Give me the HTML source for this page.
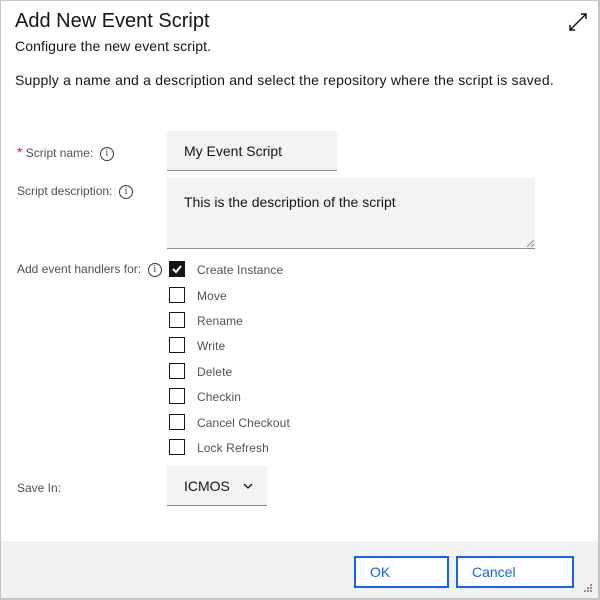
<!DOCTYPE html>
<html><head><style>
*{margin:0;padding:0;box-sizing:border-box}
body{width:600px;height:600px;background:#fff;font-family:"Liberation Sans",sans-serif;position:relative;overflow:hidden;color:#161616}
.frame{position:absolute;left:0;top:0;width:600px;height:600px;border:1px solid #c6c6c6;border-right:2px solid #c6c6c6;border-bottom:2px solid #c6c6c6}
.a{position:absolute;white-space:nowrap}
.lbl{font-size:12px;color:#525252}
.info{display:inline-block;width:14px;height:14px;border:1px solid #393939;border-radius:50%;font-size:10px;line-height:12px;text-align:center;color:#393939;font-family:"Liberation Serif",serif;vertical-align:middle}
.field{position:absolute;background:#f3f3f3;border-bottom:1px solid #8d8d8d}
.cb{position:absolute;left:169px;width:16px;height:16px;border:1px solid #161616;background:#fff}
.cbl{position:absolute;left:197px;font-size:12px;color:#525252;letter-spacing:0.1px}
.btn{position:absolute;top:556px;height:32px;border:2px solid #0f62fe;background:#fff;color:#0f62fe;font-size:14px;line-height:28px;padding-left:14px}
</style></head><body>
<div class="a" style="left:15px;top:10px;font-size:20px;">Add New Event Script</div>
<div class="a" style="left:15px;top:38px;font-size:14px;letter-spacing:0.1px">Configure the new event script.</div>
<div class="a" style="left:15px;top:72px;font-size:14px;letter-spacing:0.2px">Supply a name and a description and select the repository where the script is saved.</div>
<svg class="a" style="left:568px;top:12px" width="20" height="20" viewBox="0 0 20 20" fill="none" stroke="#161616" stroke-width="1.5"><path d="M2 18L18 2M13 2h5v5M2 13v5h5"/></svg>

<div class="a lbl" style="left:17px;top:144px;"><span style="color:#da1e28;font-size:14px">*</span> Script name:&nbsp; <span class="info">i</span></div>
<div class="field" style="left:167px;top:131px;width:170px;height:40px;"><span class="a" style="left:17px;top:12px;font-size:14px">My Event Script</span></div>
<div class="a lbl" style="left:17px;top:184px;">Script description:&nbsp; <span class="info">i</span></div>
<div class="field" style="left:167px;top:178px;width:368px;height:71px;"><span class="a" style="left:17px;top:16px;font-size:14px">This is the description of the script</span>
<svg class="a" style="right:1px;bottom:1px" width="7" height="7"><path d="M0 7L7 0M4 7L7 4" stroke="#8d8d8d"/></svg></div>

<div class="a lbl" style="left:17px;top:262px;">Add event handlers for:&nbsp; <span class="info">i</span></div>
<div class="cb" style="top:261px;background:#161616"><svg width="14" height="14" viewBox="0 0 14 14"><path d="M3 7l3 3 5-6" stroke="#fff" stroke-width="2" fill="none"/></svg></div>
<div class="cbl" style="top:263px">Create Instance</div>
<div class="cb" style="top:287px"></div><div class="cbl" style="top:289px">Move</div>
<div class="cb" style="top:312px"></div><div class="cbl" style="top:314px">Rename</div>
<div class="cb" style="top:337px"></div><div class="cbl" style="top:339px">Write</div>
<div class="cb" style="top:363px"></div><div class="cbl" style="top:365px">Delete</div>
<div class="cb" style="top:388px"></div><div class="cbl" style="top:390px">Checkin</div>
<div class="cb" style="top:414px"></div><div class="cbl" style="top:416px">Cancel Checkout</div>
<div class="cb" style="top:439px"></div><div class="cbl" style="top:441px">Lock Refresh</div>

<div class="a lbl" style="left:17px;top:481px;">Save In:</div>
<div class="field" style="left:167px;top:466px;width:100px;height:40px;"><span class="a" style="left:17px;top:12px;font-size:14px">ICMOS</span>
<svg class="a" style="left:76px;top:17px" width="10" height="7"><path d="M1 1l4 4 4-4" stroke="#161616" stroke-width="1.3" fill="none"/></svg></div>

<div class="a" style="left:0;top:541px;width:600px;height:59px;background:#f2f2f2"></div>
<div class="btn" style="left:354px;width:95px;">OK</div>
<div class="btn" style="left:456px;width:118px;">Cancel</div>
<svg class="a" style="left:583px;top:583px" width="10" height="10"><g fill="#8d8d8d"><rect x="7" y="1" width="2" height="2"/><rect x="4" y="4" width="2" height="2"/><rect x="7" y="4" width="2" height="2"/><rect x="1" y="7" width="2" height="2"/><rect x="4" y="7" width="2" height="2"/><rect x="7" y="7" width="2" height="2"/></g></svg>
<div class="frame"></div>
</body></html>
